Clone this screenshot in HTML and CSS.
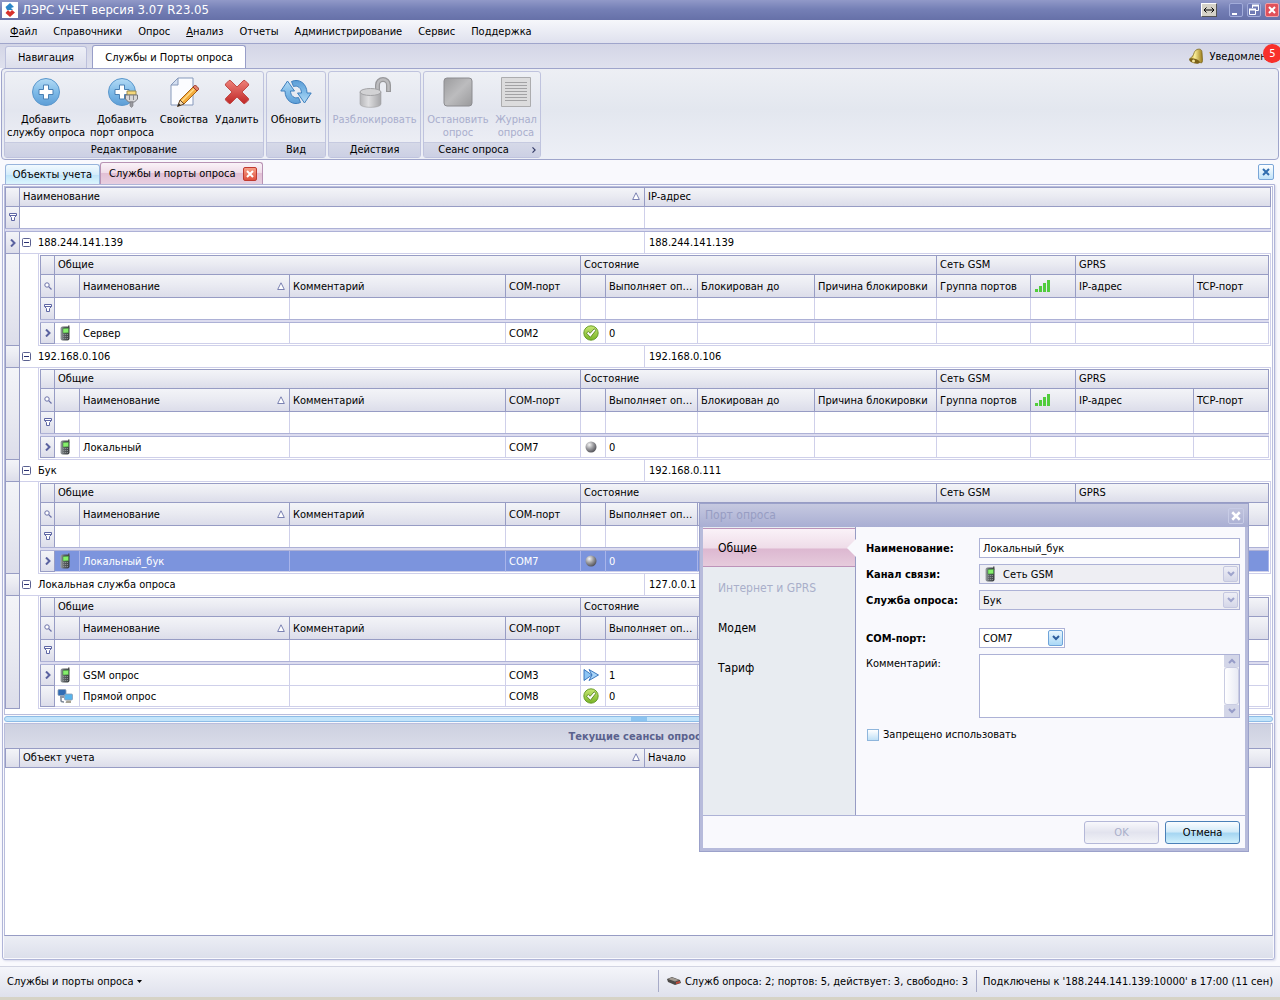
FILE: index.html
```html
<!DOCTYPE html>
<html lang="ru">
<head>
<meta charset="utf-8">
<meta name="viewport" content="width=device-width, initial-scale=1">
<title>ЛЭРС УЧЕТ</title>
<link rel="stylesheet" href="styles.css">
</head>
<body>
<svg class="defs" aria-hidden="true">
  <defs>
    <linearGradient id="g-blue" x1="0" y1="0" x2="0" y2="1"><stop offset="0" stop-color="#b4dbf5"/><stop offset=".5" stop-color="#7fbbe8"/><stop offset="1" stop-color="#5c9dd6"/></linearGradient>
    <linearGradient id="g-red" x1="0" y1="0" x2="0" y2="1"><stop offset="0" stop-color="#ee8078"/><stop offset="1" stop-color="#c02828"/></linearGradient>
    <linearGradient id="g-gray" x1="0" y1="0" x2="1" y2="0"><stop offset="0" stop-color="#b5b5b8"/><stop offset=".4" stop-color="#dedee0"/><stop offset="1" stop-color="#a5a5a8"/></linearGradient>
    <linearGradient id="g-stop" x1="0" y1="0" x2="1" y2="1"><stop offset="0" stop-color="#9c9c9e"/><stop offset=".5" stop-color="#bcbcbe"/><stop offset="1" stop-color="#9a9a9c"/></linearGradient>
    <linearGradient id="g-gold" x1="0" y1="0" x2="1" y2="0"><stop offset="0" stop-color="#c09a28"/><stop offset=".4" stop-color="#fbf09a"/><stop offset="1" stop-color="#9a7a18"/></linearGradient>
    <linearGradient id="g-phone" x1="0" y1="0" x2="1" y2="0"><stop offset="0" stop-color="#a0a5a8"/><stop offset=".4" stop-color="#5a6063"/><stop offset="1" stop-color="#3a3e40"/></linearGradient>
    <radialGradient id="g-ball" cx=".35" cy=".3" r=".75"><stop offset="0" stop-color="#f4f4f4"/><stop offset=".5" stop-color="#9a9a9e"/><stop offset="1" stop-color="#4e4e54"/></radialGradient>
    <linearGradient id="g-green" x1="0" y1="0" x2="0" y2="1"><stop offset="0" stop-color="#c8e874"/><stop offset="1" stop-color="#78b426"/></linearGradient>
    <symbol id="i-plus" viewBox="0 0 32 32">
      <circle cx="16" cy="16" r="13.500" fill="url(#g-blue)" stroke="#5b97cc"/>
      <path d="M13.500 9h5v4.500h4.500v5h-4.500V23h-5v-4.500H9v-5h4.500z" fill="#fff" stroke="#4a80b4"/>
    </symbol>
    <symbol id="i-plusport" viewBox="0 0 32 32">
      <circle cx="16" cy="16" r="13.500" fill="url(#g-blue)" stroke="#5b97cc"/>
      <path d="M13.500 9h5v4.500h4.500v5h-4.500V23h-5v-4.500H9v-5h4.500z" fill="#fff" stroke="#4a80b4"/>
      <path d="M21 15h9v4h-9z" fill="#f4d77a" stroke="#9a8a50"/>
      <path d="M19.500 19h12v4l-3 3h-6l-3-3z" fill="#d6d6d8" stroke="#77777c"/>
      <path d="M24 26h3v4l-1.500 1.500L24 30z" fill="#9a9aa0" stroke="#77777c" stroke-width=".6"/>
      <path d="M23.500 19v5M27.500 19v5" stroke="#88888e"/>
    </symbol>
    <symbol id="i-edit" viewBox="0 0 32 32">
      <path d="M10 2h15v27H3V9z" fill="#fbfcff" stroke="#8699bb"/>
      <path d="M3 9h7V2z" fill="#d3def0" stroke="#8699bb"/>
      <path d="M12 24L25 11l4 4L16 28z" fill="#f3ab3c" stroke="#a8651a"/>
      <path d="M13.500 25.500l13-13" stroke="#ffdf90" stroke-width="1.500"/>
      <path d="M25 11l1.500-1.500c1-1 5 3 4 4L29 15z" fill="#e2816a" stroke="#9a3a2a"/>
      <path d="M12 24l-2.500 6.500L16 28z" fill="#f2dcb8" stroke="#6a4a2a"/>
      <path d="M10.800 27.200l-1.300 3.300 3.300-1.300z" fill="#222"/>
    </symbol>
    <symbol id="i-delete" viewBox="0 0 32 32">
      <path d="M8 4.500Q9 4 10 5l6 6 6-6q1-1 2-.5l3.500 3.500q.5 1-.5 2l-6 6 6 6q1 1 .5 2L24 27.500q-1 .5-2-.5l-6-6-6 6q-1 1-2 .5L4.500 24q-.5-1 .5-2l6-6-6-6q-1-1-.5-2z" fill="url(#g-red)" stroke="#c04a46"/>
    </symbol>
    <symbol id="i-refresh" viewBox="0 0 32 32">
      <g id="half-arrow">
        <path d="M20.500 26.500C13 30 5 24.500 5 15H.8L7.500 5l7 10h-4c0 5 4 8 8 6.500z" fill="url(#g-blue)" stroke="#3f7fbd" stroke-linejoin="round"/>
      </g>
      <use href="#half-arrow" transform="rotate(180 16 16)"/>
    </symbol>
    <symbol id="i-unlock" viewBox="0 0 32 32">
      <path d="M18.500 16V9a5.500 5.500 0 0 1 11 0v7" fill="none" stroke="#98989b" stroke-width="5"/>
      <path d="M18.500 15V9a5.500 5.500 0 0 1 11 0v6" fill="none" stroke="#bcbcbf" stroke-width="2.500"/>
      <path d="M1 16v12c0 4.500 21 4.500 21 0V16z" fill="url(#g-gray)" stroke="#a2a2a5" stroke-width=".6"/>
      <ellipse cx="11.500" cy="16" rx="10.500" ry="3.500" fill="#d2d2d4" stroke="#a2a2a5"/>
    </symbol>
    <symbol id="i-stop" viewBox="0 0 32 32">
      <rect x="2" y="2" width="28" height="28" rx="3" fill="url(#g-stop)" stroke="#8c8c90"/>
    </symbol>
    <symbol id="i-log" viewBox="0 0 32 32">
      <path d="M1.500 1.500h29v29h-29z" fill="#dcdcdd" stroke="#acacae"/>
      <path d="M5 6.500h22M5 9.500h22M5 12.500h22M5 15.500h22M5 18.500h22M5 21.500h22M5 24.500h22" stroke="#a2a2a4"/>
    </symbol>
    <symbol id="i-bell" viewBox="0 0 16 16">
      <path d="M9 1.500c3-1 5 0 5 3l.5 8c0 1-.5 2-1 2.500L1.500 11C3 9.500 4.500 9 5.500 6.500 6.500 3.500 7 2.500 9 1.500z" fill="url(#g-gold)" stroke="#7e6a20" stroke-width=".8"/>
      <ellipse cx="6.500" cy="13" rx="5.500" ry="2.300" transform="rotate(16 6.500 13)" fill="#7b6218"/>
      <circle cx="5.500" cy="13" r="1.500" fill="#f5e7a0"/>
    </symbol>
    <symbol id="i-phone" viewBox="0 0 16 16">
      <path d="M11 .5h1.500v3H11z" fill="#555"/>
      <rect x="3.500" y="1.500" width="9" height="14" rx="2" fill="url(#g-phone)"/>
      <path d="M6 3.500l5.500-.3v4.600L6 8z" fill="#86ef6c" stroke="#3c8a38" stroke-width=".5"/>
      <path d="M6 9.500h5M6 11.500h5M6 13.500h5" stroke="#8a9092" stroke-dasharray="1.200 .7"/>
    </symbol>
    <symbol id="i-net" viewBox="0 0 16 16">
      <rect x="1" y="1.500" width="8" height="6" rx="1" fill="#2f6cb4" stroke="#8c9cb2" stroke-width=".8"/>
      <path d="M3 8h4v2H3z" fill="#8d98a6"/>
      <path d="M4 10v2.500c0 1 1 1.500 3 1.500" fill="none" stroke="#7c8898" stroke-width="1.500"/>
      <rect x="7.500" y="6" width="8" height="6" rx="1" fill="#58b4ec" stroke="#8c9cb2" stroke-width=".8"/>
      <path d="M9.500 12.500h4.500V15H8.500z" fill="#a6a294"/>
    </symbol>
    <symbol id="i-ok" viewBox="0 0 16 16">
      <circle cx="8" cy="8" r="7.200" fill="url(#g-green)" stroke="#5e9420" stroke-width=".9"/>
      <path d="M3.500 8.200L5.300 6.500l1.900 1.800 3.900-4.500 1.800 1.500-5.500 7z" fill="#fff" stroke="#4e7a14" stroke-width=".8"/>
    </symbol>
    <symbol id="i-idle" viewBox="0 0 16 16"><circle cx="8" cy="8" r="5.500" fill="url(#g-ball)"/></symbol>
    <symbol id="i-run" viewBox="0 0 16 16">
      <path d="M1 2.500L9 8l-8 5.500z" fill="#8cc4f4" stroke="#2c6cb8" stroke-width=".9" stroke-linejoin="round"/>
      <path d="M6 2.500L15.500 8 6 13.500 9 8z" fill="#a8d4f8" stroke="#2c6cb8" stroke-width=".9" stroke-linejoin="round"/>
    </symbol>
    <symbol id="i-signal" viewBox="0 0 16 12">
      <path d="M0 9h3v3H0zM4 6h3v6H4zM8 3h3v9H8zM12 0h3v12h-3z" fill="#50cc3c"/>
    </symbol>
    <symbol id="i-filter" viewBox="0 0 8 8"><path d="M.5.500h7v2l-2 2v3h-3v-3l-2-2zM.5 2.500h7" fill="#fff" stroke="#5e66a4"/></symbol>
    <symbol id="i-search" viewBox="0 0 8 8"><circle cx="3" cy="3" r="2.200" fill="#fff" stroke="#6a70a8"/><path d="M4.700 4.700L7.500 7.500" stroke="#6a70a8" stroke-width="1.200"/></symbol>
    <symbol id="i-current" viewBox="0 0 8 8"><path d="M2 .5L5.500 4 2 7.500" fill="none" stroke="#5a62a0" stroke-width="2"/></symbol>
    <symbol id="i-minus" viewBox="0 0 9 9"><rect x=".5" y=".5" width="8" height="8" rx="1" fill="#fff" stroke="#5a6090"/><path d="M2 4.500h5" stroke="#2a3070"/></symbol>
    <symbol id="i-sort" viewBox="0 0 8 8"><path d="M4 .8L7.300 7.500H.7z" fill="#fff" stroke="#5c64a0" stroke-width=".8"/></symbol>
    <symbol id="i-x" viewBox="0 0 8 8"><path d="M1 1l6 6M7 1L1 7" stroke="currentColor" stroke-width="2"/></symbol>
    <symbol id="i-down" viewBox="0 0 8 6"><path d="M1 1l3 3 3-3" fill="none" stroke="currentColor" stroke-width="2"/></symbol>
    <symbol id="i-up" viewBox="0 0 8 6"><path d="M1 5l3-3 3 3" fill="none" stroke="currentColor" stroke-width="2"/></symbol>
  </defs>
</svg>

<div class="app">
  <header class="titlebar">
    <svg class="logo" viewBox="0 0 16 16" aria-hidden="true"><path d="M0 0h16v16H0z" fill="#fff"/><path d="M8 1l4 4-3 1 2 2H5L3.500 5z" fill="#2c86c8"/><path d="M8 15l-4.500-4L6 8l2 2 2-2 3 2.500z" fill="#d8322c"/></svg>
    <h1 class="title">ЛЭРС УЧЕТ версия 3.07 R23.05</h1>
    <button class="resize" aria-label="Размер"><svg width="12" height="8" viewBox="0 0 12 8"><path d="M1 4h10M3.500 1.500L1 4l2.500 2.500M8.500 1.500L11 4 8.500 6.500" fill="none" stroke="#000"/></svg></button>
    <button class="win" aria-label="Свернуть"><svg width="12" height="12" viewBox="0 0 12 12"><path d="M2 9h5v2H2z" fill="#fff"/></svg></button>
    <button class="win" aria-label="Восстановить"><svg width="12" height="12" viewBox="0 0 12 12"><path d="M4.500 4V1.500h6v5H8M1.500 5.500h6v5h-6z" fill="none" stroke="#fff"/><path d="M4 1.500h7M1 5.500h7" stroke="#fff" stroke-width="2"/></svg></button>
    <button class="win win-close" aria-label="Закрыть"><svg width="8" height="8"><use href="#i-x"/></svg></button>
  </header>

  <nav class="menubar">
    <a href="#"><u>Ф</u>айл</a><a href="#">Справочники</a><a href="#">Опрос</a><a href="#"><u>А</u>нализ</a><a href="#">Отчеты</a><a href="#">Администрирование</a><a href="#">Сервис</a><a href="#">Поддержка</a>
  </nav>

  <div class="ribbon-tabs">
    <button class="rtab">Навигация</button>
    <button class="rtab rtab-on">Службы и Порты опроса</button>
    <a class="notice" href="#"><svg width="16" height="16"><use href="#i-bell"/></svg><span>Уведомления</span><b class="badge">5</b></a>
  </div>

  <section class="ribbon">
    <div class="rgroup">
      <div class="rbody">
        <button class="rbtn w-82"><svg width="32" height="32"><use href="#i-plus"/></svg><span>Добавить<br>службу опроса</span></button>
        <button class="rbtn w-70"><svg width="32" height="32"><use href="#i-plusport"/></svg><span>Добавить<br>порт опроса</span></button>
        <button class="rbtn w-54"><svg width="32" height="32"><use href="#i-edit"/></svg><span>Свойства</span></button>
        <button class="rbtn w-52"><svg width="32" height="32"><use href="#i-delete"/></svg><span>Удалить</span></button>
      </div>
      <div class="rcap">Редактирование</div>
    </div>
    <div class="rgroup">
      <div class="rbody"><button class="rbtn w-58"><svg width="32" height="32"><use href="#i-refresh"/></svg><span>Обновить</span></button></div>
      <div class="rcap">Вид</div>
    </div>
    <div class="rgroup">
      <div class="rbody"><button class="rbtn w-91" disabled><svg width="32" height="32"><use href="#i-unlock"/></svg><span>Разблокировать</span></button></div>
      <div class="rcap">Действия</div>
    </div>
    <div class="rgroup">
      <div class="rbody">
        <button class="rbtn w-68" disabled><svg width="32" height="32"><use href="#i-stop"/></svg><span>Остановить<br>опрос</span></button>
        <button class="rbtn w-48" disabled><svg width="32" height="32"><use href="#i-log"/></svg><span>Журнал<br>опроса</span></button>
      </div>
      <div class="rcap rcap-more"><span>Сеанс опроса</span><svg width="6" height="6" viewBox="0 0 8 8"><path d="M2 .5L5.500 4 2 7.500" fill="none" stroke="#333a66" stroke-width="1.500"/></svg></div>
    </div>
  </section>

  <div class="doc-tabs">
    <button class="dtab">Объекты учета</button>
    <div class="dtab dtab-on"><span>Службы и порты опроса</span><button class="dclose" aria-label="Закрыть вкладку"><svg width="8" height="8"><use href="#i-x"/></svg></button></div>
    <button class="pane-close" aria-label="Закрыть"><svg width="8" height="8"><use href="#i-x"/></svg></button>
  </div>

  <main class="panel">
    <div class="pane">
      <table class="grid">
        <colgroup><col class="c15"><col class="c625"><col></colgroup>
        <thead>
          <tr class="r-head"><th></th><th><div class="sorted">Наименование<svg width="8" height="8"><use href="#i-sort"/></svg></div></th><th>IP-адрес</th></tr>
          <tr class="r-filter"><th><svg width="8" height="8"><use href="#i-filter"/></svg></th><td></td><td></td></tr>
          <tr class="r-sep"><td colspan="3"></td></tr>
        </thead>
        <tbody id="services"></tbody>
      </table>
    </div>
    <div class="splitter"><span></span></div>
    <div class="sessions">
      <h2 class="stitle">Текущие сеансы опроса</h2>
      <table class="grid">
        <colgroup><col class="c15"><col class="c625"><col></colgroup>
        <thead><tr class="r-head"><th></th><th><div class="sorted">Объект учета<svg width="8" height="8"><use href="#i-sort"/></svg></div></th><th>Начало</th></tr></thead>
      </table>
    </div>
    <div class="pfoot"></div>
  </main>

  <footer class="status">
    <button class="st-menu">Службы и порты опроса<svg width="5" height="3" viewBox="0 0 5 3"><path d="M0 0h5L2.500 3z"/></svg></button>
    <div class="st-cell"><svg width="14" height="10" viewBox="0 0 14 10"><path d="M0 3l5-2 8 3 1 3-6 2-7-3z" fill="#4c4a48"/><path d="M1 3l4-1.500 7 2.500-4 1.500z" fill="#a39c94"/><path d="M9 6l4-1v2L9 8z" fill="#c04a3a"/></svg>Служб опроса: 2; портов: 5, действует: 3, свободно: 3</div>
    <div class="st-cell">Подключены к '188.244.141.139:10000' в 17:00 (11 сен)</div>
  </footer>
</div>

<form class="dialog" role="dialog" aria-labelledby="dlg-title">
  <div class="dlg-head"><span id="dlg-title">Порт опроса</span><button type="button" class="dlg-x" aria-label="Закрыть"><svg width="10" height="10"><use href="#i-x"/></svg></button></div>
  <div class="dlg-main">
    <nav class="dlg-nav">
      <button type="button" class="nav-on">Общие</button>
      <button type="button" disabled>Интернет и GPRS</button>
      <button type="button">Модем</button>
      <button type="button">Тариф</button>
    </nav>
    <div class="dlg-body">
      <div class="frow"><label for="f-name">Наименование:</label><input id="f-name" class="field" type="text" value="Локальный_бук"></div>
      <div class="frow"><label for="f-chan">Канал связи:</label><div class="combo combo-icon"><svg class="cicon" width="16" height="16"><use href="#i-phone"/></svg><select id="f-chan" class="field" disabled><option>Сеть GSM</option></select><span class="drop drop-off"><svg width="8" height="6"><use href="#i-down"/></svg></span></div></div>
      <div class="frow frow-gap"><label for="f-srv">Служба опроса:</label><div class="combo"><select id="f-srv" class="field" disabled><option>Бук</option></select><span class="drop drop-off"><svg width="8" height="6"><use href="#i-down"/></svg></span></div></div>
      <div class="frow"><label for="f-com">COM-порт:</label><div class="combo combo-short"><select id="f-com" class="field"><option>COM7</option></select><span class="drop"><svg width="8" height="6"><use href="#i-down"/></svg></span></div></div>
      <div class="frow frow-top"><label for="f-note" class="plain">Комментарий:</label><div class="memo"><textarea id="f-note"></textarea><div class="scroll"><span><svg width="8" height="6"><use href="#i-up"/></svg></span><i></i><span><svg width="8" height="6"><use href="#i-down"/></svg></span></div></div></div>
      <label class="check"><input type="checkbox">Запрещено использовать</label>
    </div>
  </div>
  <div class="dlg-foot"><button type="button" class="btn" disabled>OK</button><button type="button" class="btn btn-hot">Отмена</button></div>
</form>
<script src="app.js"></script>
</body>
</html>
```

FILE: styles.css
```css
* { box-sizing: border-box; }

:root {
  --line: #979cc4;
  --soft: #cfd0ea;
  --head: linear-gradient(#f3f4f8, #eaebf2 45%, #dcddea);
}

body {
  margin: 0;
  background: #f9f9fd;
  color: #000;
  font: 11px/13px "DejaVu Sans Condensed", "DejaVu Sans", sans-serif;
  overflow-x: hidden;
}

button, input, select, textarea { font: inherit; color: inherit; margin: 0; }
button { padding: 0; border: 0; background: none; }
a { color: inherit; text-decoration: none; }
svg { display: block; flex: none; }
.defs { position: absolute; width: 0; height: 0; }

.app { min-height: 100vh; display: flex; flex-direction: column; border-bottom: 3px solid #d6d3c6; }

/* window title */
.titlebar {
  display: flex; align-items: center; height: 20px; padding: 0 1px 0 2px; gap: 4px;
  background: linear-gradient(#9199c8, #7580b6 45%, #6670a8);
  color: #fff;
}
.logo { width: 16px; height: 16px; }
.title { flex: 1; margin: 0; font-size: 13px; line-height: 16px; font-weight: normal; }
.resize, .win { display: grid; place-items: center; width: 14px; height: 14px; }
.resize { width: 16px; margin-right: 8px; background: #d6d3c8; border: 1px solid; border-color: #fff #555 #555 #fff; }
.win { border: 1px solid #a2acda; border-radius: 2px; background: #6f7ab4; }
.win-close { background: #e0505a; border-color: #f0a0a8; }

.menubar {
  display: flex; align-items: center; height: 24px; padding-left: 2px;
  background: linear-gradient(#f6f7fb, #dfe1ee);
  border-bottom: 1px solid #9fa5cb;
}
.menubar a { padding: 0 8px; }

/* ribbon */
.ribbon-tabs {
  display: flex; align-items: flex-end; gap: 5px; height: 24px; padding-left: 5px;
  background: linear-gradient(#d3d5e6, #dfe1ee);
}
.rtab { width: 82px; height: 22px; border: 1px solid #bcc0dc; border-bottom: 0; border-radius: 3px 3px 0 0; background: linear-gradient(#eef0f7, #dcdeec); }
.rtab-on { width: 154px; height: 23px; border-color: #989ec8; background: #fff; }
.notice { position: relative; display: flex; align-items: center; gap: 5px; height: 22px; margin-left: auto; padding-right: 1px; align-self: center; }
.badge {
  position: absolute; right: -2px; top: -1px; width: 19px; height: 19px; border-radius: 50%;
  background: #f8302a; color: #fff; line-height: 19px; font-weight: normal; text-align: center;
}
.ribbon {
  display: flex; gap: 2px; height: 92px; margin: 0 1px; padding: 2px;
  border: 1px solid #9fa5cb; border-radius: 4px;
  background: linear-gradient(#edeff4, #e3e7ef 45%, #edeff6);
}
.rgroup { display: flex; flex-direction: column; height: 87px; border: 1px solid #bfc3de; border-radius: 3px; background: linear-gradient(#eef0f5, #e3e6ef 45%, #f0f1f7); }
.rbody { display: flex; flex: 1; }
.rbtn { display: flex; flex-direction: column; align-items: center; padding-top: 4px; gap: 5px; white-space: nowrap; }
.rbtn:disabled { color: #a9aecd; }
.w-82 { width: 82px; } .w-70 { width: 70px; } .w-54 { width: 54px; } .w-52 { width: 52px; }
.w-58 { width: 58px; } .w-91 { width: 91px; } .w-68 { width: 68px; } .w-48 { width: 48px; }
.rcap { height: 15px; line-height: 14px; text-align: center; background: linear-gradient(#d6d9e8, #ccd0e4); border-top: 1px solid #c6cae0; }
.rcap-more { display: flex; align-items: center; padding-right: 3px; }
.rcap-more span { flex: 1; padding-right: 8px; }

/* document tabs */
.doc-tabs { display: flex; align-items: flex-end; height: 24px; padding: 0 6px 0 5px; background: #f9f9fd; }
.dtab { height: 20px; width: 95px; border: 1px solid #98b4dc; border-bottom: 0; border-radius: 3px 3px 0 0; background: linear-gradient(#f2fafe, #d4ecfb 50%, #bde2f8 50%, #dcf6fd); }
.dtab-on {
  display: flex; align-items: center; justify-content: space-between; width: 163px; height: 22px; padding: 0 5px 0 8px;
  border-color: #b893b4; background: linear-gradient(#faf3f8, #f0dde9 45%, #e2c0d5 50%, #e8cfe0);
}
.dclose { display: grid; place-items: center; width: 14px; height: 14px; border: 1px solid #c03a30; border-radius: 2px; background: linear-gradient(#f6a088, #e0503e); color: #fff; }
.pane-close { display: grid; place-items: center; width: 16px; height: 16px; margin: 0 0 4px auto; border: 1px solid #7aa6d8; border-radius: 2px; background: linear-gradient(#fff, #bfe2f8); color: #2f6cae; }

/* main panel */
.panel {
  flex: 1; display: flex; flex-direction: column; margin: 0 5px 6px 2px; padding: 1px;
  border: 1px solid #b0b5d8; border-radius: 0 0 3px 3px; background: #f9f9fd; box-shadow: 1px 1px 2px #d8daea;
}
.pane { border: 1px solid #b9bddc; padding: 0 1px 5px 0; background: #fff; }
.grid { width: 100%; table-layout: fixed; border-collapse: separate; border-spacing: 0; }
.c15 { width: 15px; } .c625 { width: 625px; }
.grid th, .grid td { padding: 0 3px; text-align: left; font-weight: normal; white-space: nowrap; overflow: hidden; text-overflow: ellipsis; }
.grid th { border-right: 1px solid var(--line); border-bottom: 1px solid var(--line); background: var(--head); }
.grid td { border-right: 1px solid var(--soft); border-bottom: 1px solid var(--soft); }
.grid tr > :first-child { border-left: 1px solid var(--line); }
.grid th:first-child { padding: 0; }
.grid th svg { margin: 0 auto; }
.grid .sorted { display: flex; align-items: center; justify-content: space-between; padding-right: 1px; }
.grid .sorted svg { margin: 0; }
.grid .r-head { height: 20px; }
.grid .r-head th { border-top: 1px solid var(--line); padding-bottom: 2px; }
.grid .r-filter { height: 21px; }
.grid .r-filter td { border-bottom: 0; }
.grid .r-filter th { border-bottom: 0; padding-bottom: 2px; }
.grid .r-sep { height: 4px; }
.grid .r-sep td { padding: 0; border: 1px solid #adb1d6; border-width: 1px 0; background: #dcdcef; }
.grid .r-service { height: 22px; }
.grid .r-service td { padding-left: 4px; }
.grid .r-service .svc { padding-left: 2px; }
.svc div { display: flex; align-items: center; gap: 7px; }
.grid .r-service td:last-child { border-right: 0; }
.grid .r-detail > td { padding: 0 0 0 18px; border: 0; }
.nested { border: 1px solid var(--soft); border-top: 0; padding: 1px; }
.nested .r-cols { height: 23px; }
.nested .r-port { height: 21px; }
.nested .r-port .pic { padding: 0 0 0 2px; }
.nested .r-sel td { background: #7c94dd; border-right-color: #a8b4ea; color: #fff; }
.w25 { width: 25px; } .w210 { width: 210px; } .w216 { width: 216px; } .w75 { width: 75px; } .w92 { width: 92px; }
.w117 { width: 117px; } .w122 { width: 122px; } .w94 { width: 94px; } .w45 { width: 45px; } .w118 { width: 118px; }
.grid th .sig { margin: 0 0 0 1px; }

.splitter { display: flex; justify-content: center; height: 6px; margin: 1px 0; border: 1px solid #8dbce6; border-radius: 3px; background: #c2e4fa; }
.splitter span { width: 16px; background: #8cc4f0; }

.sessions { flex: 1; border: 1px solid #b9bddc; border-bottom-color: var(--line); background: #fff; padding-right: 1px; }
.stitle { margin: 0; height: 24px; padding-top: 1px; font-size: 11px; line-height: 24px; text-align: center; color: #5a628e; background: linear-gradient(#cdd0e0, #dadce9); }
.pfoot { height: 22px; background: linear-gradient(#eceef5, #dcdfeb); }

.status { display: flex; align-items: center; height: 31px; padding: 0 7px 2px; background: linear-gradient(#f4f5fa, #dfe1ec); border-top: 1px solid #d2d4e2; }
.st-menu { display: flex; align-items: center; gap: 3px; margin-right: auto; }
.st-cell { display: flex; align-items: center; gap: 4px; height: 22px; padding: 0 8px; border-left: 1px solid #a7abc8; }
.st-cell:last-child { padding: 0 0 0 6px; }

/* port dialog */
.dialog {
  position: absolute; left: 699px; top: 503px; width: 550px; height: 349px;
  display: flex; flex-direction: column; padding: 0 3px 3px;
  border: 1px solid #9ba1ca; background: #b7bbdb;
}
.dlg-head { display: flex; align-items: center; justify-content: space-between; height: 23px; margin: 0 -3px; padding: 0 4px 0 5px; background: linear-gradient(#c6c9e0, #a9aed3); color: #979dc3; font-size: 12px; }
.dlg-x { display: grid; place-items: center; width: 16px; height: 16px; border: 1px solid #c8cce6; border-radius: 2px; color: #fff; }
.dlg-main { display: flex; flex: 1; background: #f9f9fd; }
.dlg-nav { width: 153px; display: flex; flex-direction: column; gap: 1px; padding-top: 1px; background: #e8ecf1; border-right: 1px solid var(--line); }
.dlg-nav button { height: 39px; padding: 2px 0 0 15px; text-align: left; font-size: 12px; }
.dlg-nav button:disabled { color: #a9afca; }
.dlg-nav .nav-on { position: relative; border: 1px solid #bd93b9; border-width: 1px 0; background: linear-gradient(#faf2f8, #efdde9 50%, #ddb8d1 55%, #e6cbdc); }
.nav-on::after { content: ""; position: absolute; right: -1px; top: 10px; border: 9px solid transparent; border-right: 9px solid #f9f9fd; border-left: 0; }
.dlg-body { flex: 1; display: flex; flex-direction: column; gap: 6px; padding: 11px 5px 0 10px; }
.frow { display: flex; align-items: center; min-height: 20px; }
.frow-gap { margin-bottom: 12px; }
.frow label { width: 113px; font-weight: bold; }
.frow .plain { font-weight: normal; }
.frow-top { align-items: flex-start; }
.frow-top label { padding-top: 3px; }
.field { flex: 1; min-width: 0; width: 100%; height: 20px; padding: 0 3px; border: 1px solid #adb2d6; border-radius: 0; background: #fff; appearance: none; outline: 0; }
.field:disabled { background: #eeeef3; color: #000; opacity: 1; }
.combo { position: relative; flex: 1; display: flex; }
.combo-short { flex: none; width: 86px; }
.combo-icon .field { padding-left: 23px; }
.cicon { position: absolute; left: 3px; top: 2px; }
.drop { position: absolute; right: 2px; top: 2px; width: 15px; height: 16px; display: grid; place-items: center; border: 1px solid #6fa4da; border-radius: 2px; background: linear-gradient(#e8f5fd, #a9d8f6); color: #2d5c9c; pointer-events: none; }
.drop-off { border-color: #c5c8e0; background: linear-gradient(#eeeef6, #d5d7e8); color: #9ea4cc; }
.memo { flex: 1; display: flex; height: 64px; border: 1px solid #adb2d6; background: #fff; }
.memo textarea { flex: 1; min-width: 0; border: 0; resize: none; outline: 0; background: none; overflow: hidden; }
.scroll { display: flex; flex-direction: column; width: 15px; background: #f0f1f7; }
.scroll span { display: grid; place-items: center; height: 12px; background: #d3d6e8; color: #969cc8; }
.scroll i { flex: 1; border: 1px solid #c9cce2; border-radius: 3px; background: linear-gradient(90deg, #fff, #e8eaf4); }
.check { display: flex; align-items: center; gap: 4px; margin: 4px 0 0 1px; }
.check input { appearance: none; width: 12px; height: 12px; border: 1px solid #8fb6dc; background: linear-gradient(#fff, #bfe0f6); }
.dlg-foot { display: flex; justify-content: flex-end; gap: 6px; height: 33px; padding: 5px 5px 0; border-top: 1px solid #adb2d6; background: #f9f9fd; }
.btn { width: 75px; height: 23px; border: 1px solid #b4b8d8; border-radius: 3px; background: linear-gradient(#f8f8fc, #e2e3ee 50%, #f2f3f8); }
.btn:disabled { color: #a9afca; }
.btn-hot { border-color: #4a80b8; background: linear-gradient(#fafdff, #d3ebf9 45%, #a6d6f2 55%, #d0f0fc); }
```

FILE: app.js
```js
const icon = (name, w = 16, h = w, cls = '') =>
  `<svg class="${cls}" width="${w}" height="${h}"><use href="#i-${name}"/></svg>`;

const services = [
  { name: '188.244.141.139', ip: '188.244.141.139', current: true,
    ports: [{ kind: 'phone', name: 'Сервер', com: 'COM2', state: 'ok', busy: 0 }] },
  { name: '192.168.0.106', ip: '192.168.0.106',
    ports: [{ kind: 'phone', name: 'Локальный', com: 'COM7', state: 'idle', busy: 0 }] },
  { name: 'Бук', ip: '192.168.0.111',
    ports: [{ kind: 'phone', name: 'Локальный_бук', com: 'COM7', state: 'idle', busy: 0, selected: true }] },
  { name: 'Локальная служба опроса', ip: '127.0.0.1',
    ports: [
      { kind: 'phone', name: 'GSM опрос', com: 'COM3', state: 'run', busy: 1 },
      { kind: 'net', name: 'Прямой опрос', com: 'COM8', state: 'ok', busy: 0 }
    ] }
];

const widths = ['c15', 'w25', 'w210', 'w216', 'w75', 'w25', 'w92', 'w117', 'w122', 'w94', 'w45', 'w118', ''];

const portRow = (p, i) => `
  <tr class="r-port${p.selected ? ' r-sel' : ''}">
    <th>${i === 0 ? icon('current', 8) : ''}</th>
    <td class="pic">${icon(p.kind)}</td><td>${p.name}</td><td></td><td>${p.com}</td>
    <td class="pic">${icon(p.state)}</td><td>${p.busy}</td>${'<td></td>'.repeat(6)}
  </tr>`;

const portTable = ports => `
  <div class="nested"><table class="grid">
    <colgroup>${widths.map(w => `<col class="${w}">`).join('')}</colgroup>
    <thead>
      <tr class="r-head"><th></th><th colspan="4">Общие</th><th colspan="4">Состояние</th><th colspan="2">Сеть GSM</th><th colspan="2">GPRS</th></tr>
      <tr class="r-cols"><th>${icon('search', 8)}</th><th></th>
        <th><div class="sorted">Наименование${icon('sort', 8)}</div></th>
        <th>Комментарий</th><th>COM-порт</th><th></th><th>Выполняет опрос</th><th>Блокирован до</th>
        <th>Причина блокировки</th><th>Группа портов</th><th>${icon('signal', 16, 12, 'sig')}</th><th>IP-адрес</th><th>TCP-порт</th></tr>
      <tr class="r-filter"><th>${icon('filter', 8)}</th>${'<td></td>'.repeat(12)}</tr>
      <tr class="r-sep"><td colspan="13"></td></tr>
    </thead>
    <tbody>${ports.map(portRow).join('')}</tbody>
  </table></div>`;

document.getElementById('services').innerHTML = services.map(s => `
  <tr class="r-service"><th>${s.current ? icon('current', 8) : ''}</th>
    <td class="svc"><div>${icon('minus', 9)}${s.name}</div></td><td>${s.ip}</td></tr>
  <tr class="r-detail"><th></th><td colspan="2">${portTable(s.ports)}</td></tr>`).join('');
```
